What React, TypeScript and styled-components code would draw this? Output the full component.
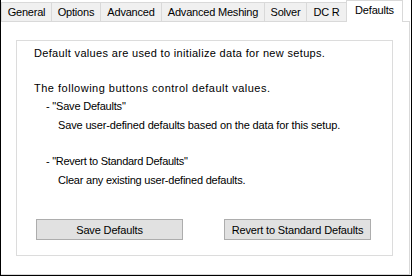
import React from "react";
import styled, { createGlobalStyle } from "styled-components";

const Global = createGlobalStyle`
  html, body { margin: 0; padding: 0; background: #ffffff; }
  body { font-family: "Liberation Sans", Arial, sans-serif; font-size: 11px; color: #000; }
`;

const Window = styled.div`
  width: 412px;
  height: 276px;
  box-sizing: border-box;
  border-left: 1px solid #000;
  border-right: 1px solid #000;
  border-bottom: 1px solid #000;
  display: flex;
  flex-direction: column;
  background: #fff;
`;

const TabStrip = styled.div`
  height: 21px;
  display: flex;
  align-items: flex-end;
  position: relative;
  z-index: 1;
`;

const Tab = styled.div<{ $w: number; $active?: boolean }>`
  box-sizing: border-box;
  width: ${(p) => p.$w}px;
  height: ${(p) => (p.$active ? 22 : 19)}px;
  margin-left: -1px;
  margin-bottom: ${(p) => (p.$active ? -1 : 0)}px;
  &:first-child { margin-left: 0; }
  border: 1px solid #d9d9d9;
  border-bottom: none;
  background: ${(p) => (p.$active ? "#ffffff" : "#f0f0f0")};
  position: relative;
  z-index: ${(p) => (p.$active ? 2 : 1)};
  display: flex;
  justify-content: center;
  align-items: flex-start;
  padding-top: 3px;
  font-size: 11px;
  letter-spacing: -0.2px;
  white-space: nowrap;
`;

const Panel = styled.div`
  flex: 1;
  margin-right: 1px;
  box-sizing: border-box;
  border: 1px solid #d9d9d9;
  border-left: none;
  padding: 18px 0 0 15px;
`;

const GroupBox = styled.div`
  box-sizing: border-box;
  width: 377px;
  height: 216px;
  border: 1px solid #dcdcdc;
  display: flex;
  flex-direction: column;
  padding: 0 0 15px 0;
`;

const Line = styled.div<{ $top: number; $indent: number; $ls: number }>`
  margin-top: ${(p) => p.$top}px;
  padding-left: ${(p) => p.$indent}px;
  line-height: 13px;
  height: 13px;
  white-space: nowrap;
  letter-spacing: ${(p) => p.$ls}px;
`;

const ButtonRow = styled.div`
  margin-top: auto;
  display: flex;
  justify-content: space-between;
  padding: 0 21px 0 19px;
`;

const Button = styled.button`
  box-sizing: border-box;
  width: 147px;
  height: 21px;
  background: #e1e1e1;
  border: 1px solid #adadad;
  border-radius: 0;
  padding: 0;
  font-family: "Liberation Sans", Arial, sans-serif;
  font-size: 11px;
  letter-spacing: -0.15px;
  color: #000;
  display: flex;
  align-items: center;
  justify-content: center;
`;

const tabs = [
  { label: "General", w: 51 },
  { label: "Options", w: 50 },
  { label: "Advanced", w: 62 },
  { label: "Advanced Meshing", w: 104 },
  { label: "Solver", w: 43 },
  { label: "DC R", w: 41 },
  { label: "Defaults", w: 57, active: true },
];

const lines = [
  { text: "Default values are used to initialize data for new setups.", top: 6, indent: 17, ls: 0.33 },
  { text: "The following buttons control default values.", top: 22, indent: 17, ls: 0.5 },
  { text: "- \"Save Defaults\"", top: 5, indent: 29, ls: -0.2 },
  { text: "Save user-defined defaults based on the data for this setup.", top: 6, indent: 41, ls: -0.15 },
  { text: "- \"Revert to Standard Defaults\"", top: 23, indent: 29, ls: -0.28 },
  { text: "Clear any existing user-defined defaults.", top: 6, indent: 41, ls: -0.22 },
];

export default function App() {
  return (
    <>
      <Global />
      <Window>
        <TabStrip>
          {tabs.map((t) => (
            <Tab key={t.label} $w={t.w} $active={t.active}>
              {t.label}
            </Tab>
          ))}
        </TabStrip>
        <Panel>
          <GroupBox>
            {lines.map((l, i) => (
              <Line key={i} $top={l.top} $indent={l.indent} $ls={l.ls}>
                {l.text}
              </Line>
            ))}
            <ButtonRow>
              <Button>Save Defaults</Button>
              <Button>Revert to Standard Defaults</Button>
            </ButtonRow>
          </GroupBox>
        </Panel>
      </Window>
    </>
  );
}
